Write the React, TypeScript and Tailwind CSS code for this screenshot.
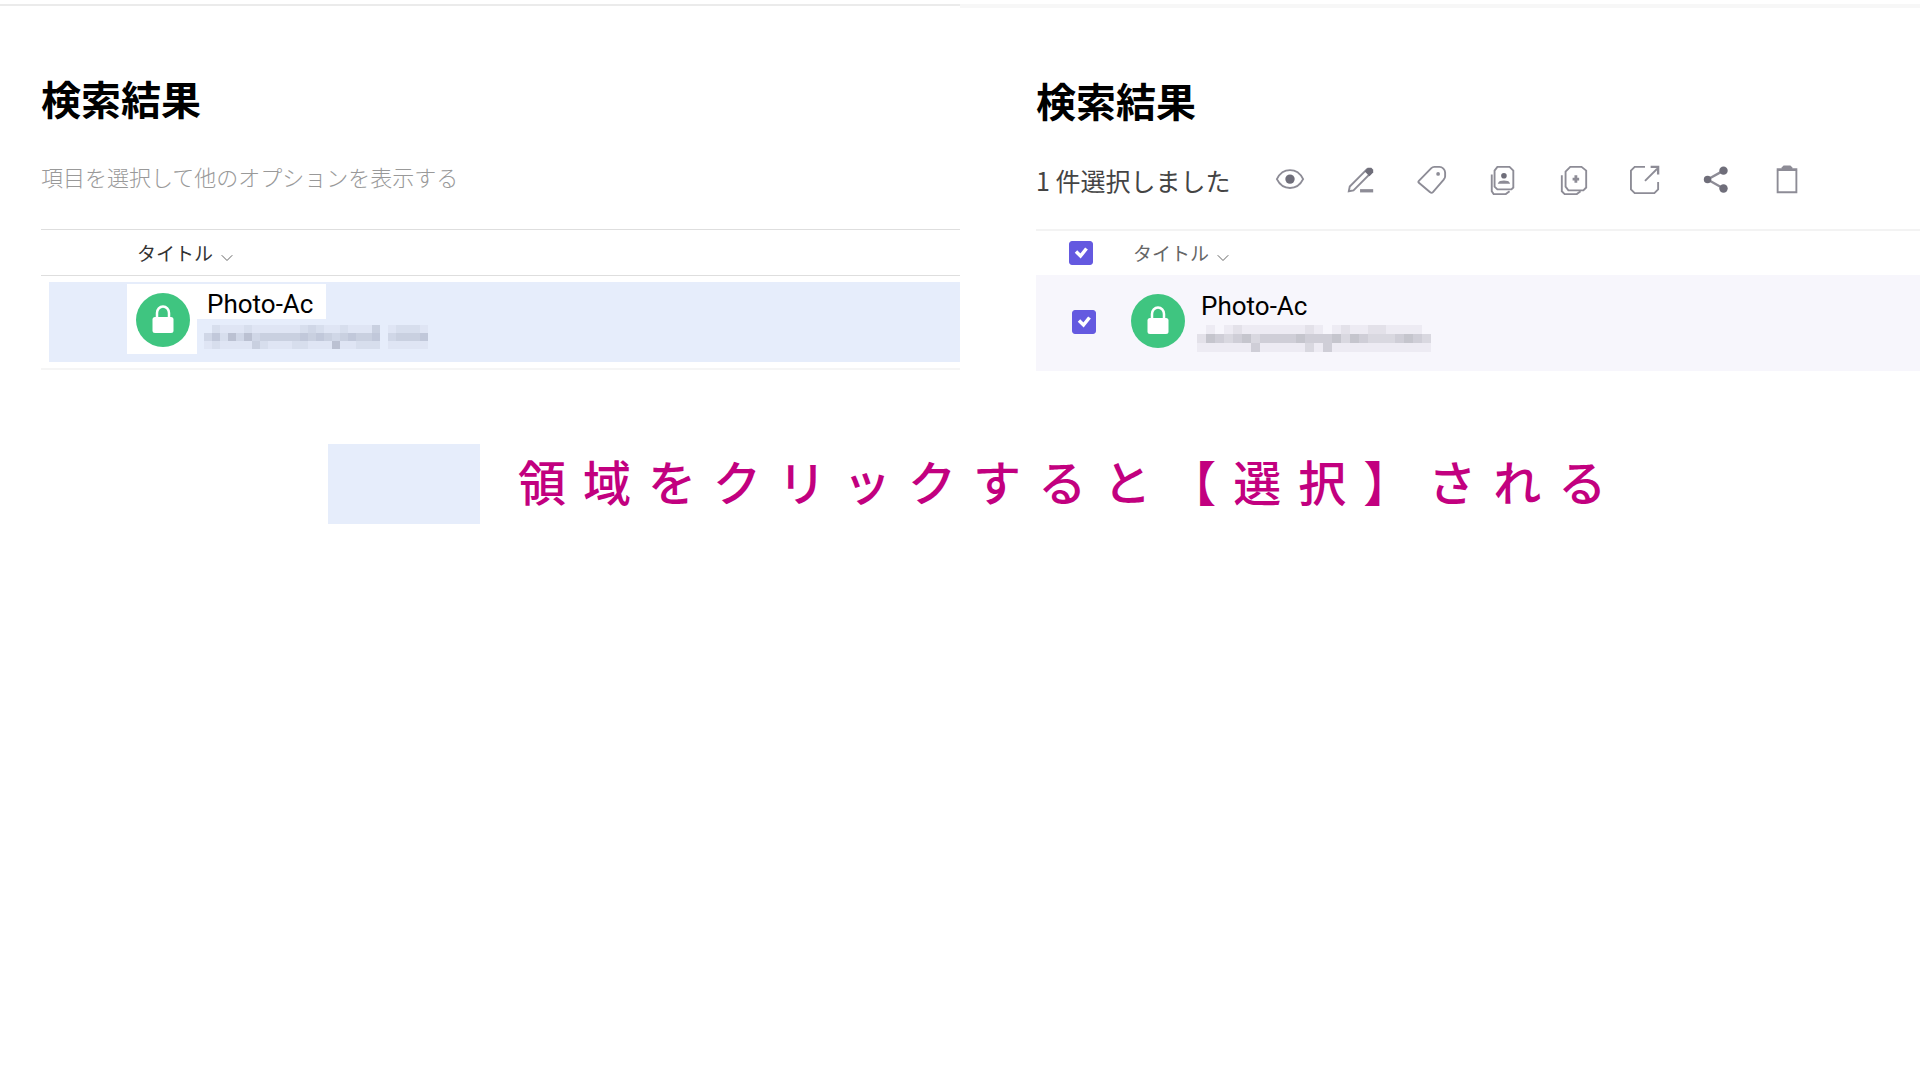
import { ChevronDown } from "lucide-react";

const jp = "font-['Noto_Sans_CJK_JP',sans-serif]";

const caption = "領域をクリックすると【選択】される";

const icons = [
  {
    label: "表示",
    art: (
      <>
        <path d="M2 15c3-6 7.500-9.500 14-9.500S27 9 30 15c-3 6-7.500 9.500-14 9.500S5 21 2 15z" />
        <circle cx="16" cy="15" r="5" fill="#6f6e7a" stroke="none" />
      </>
    ),
  },
  {
    label: "編集",
    art: (
      <>
        <path d="M3 28l1-5L22 5l4 4L8 27z" />
        <path d="M20 7l3-4h4l2 2v3l-4 4z" fill="#6f6e7a" stroke="none" />
        <path d="M15 27.500h14" strokeWidth="3.500" />
      </>
    ),
  },
  {
    label: "タグ",
    art: (
      <>
        <path d="M2 17L15 3.500c1-1 2-1.500 3.500-1.500H24c3 0 6 3 6 6v4c0 1.500-.5 2.500-1.500 3.500L17 29c-1 1-2 1-3 0l-12-10c-.7-.7-.7-1.300 0-2z" />
        <circle cx="22.500" cy="9.500" r="1" />
      </>
    ),
  },
  {
    label: "共有フォルダー",
    art: (
      <>
        <path d="M10 2h13l4 4v18l-2 2H10l-3-3V6z" />
        <path d="M4 10v18l2 3h13l4-3" />
        <circle cx="17" cy="11.500" r="3" fill="#6f6e7a" stroke="none" />
        <path d="M12 19c1-2 9-2 10 0z" fill="#6f6e7a" />
      </>
    ),
  },
  {
    label: "フォルダーに追加",
    art: (
      <>
        <path d="M12 2h12l5 4v18l-3 3H10l-3-4V7z" />
        <path d="M3 11v17l3 3h13l4-3" />
        <path d="M18 11v8M14.500 15h7" strokeWidth="3" />
      </>
    ),
  },
  {
    label: "開く",
    art: (
      <>
        <path d="M16 2H5L1 6v20l4 4h21l4-4v-8" />
        <path d="M16 17L29 4" />
        <path d="M22 2h8v8" strokeWidth="2.500" />
      </>
    ),
  },
  {
    label: "共有",
    art: (
      <>
        <path d="M24 6L7 15.500 24 25" strokeWidth="2.500" />
        <g fill="#6f6e7a" stroke="none">
          <circle cx="24" cy="6" r="4.500" />
          <circle cx="7" cy="15.500" r="4" />
          <circle cx="24" cy="25" r="4.500" />
        </g>
      </>
    ),
  },
  {
    label: "削除",
    art: (
      <>
        <path d="M6 6v23h20V6" />
        <path d="M5 5h22M11 4l2-2h6l2 2" strokeWidth="3" />
      </>
    ),
  },
];

function LockBadge() {
  return (
    <svg viewBox="0 0 54 54" className="size-[54px] shrink-0">
      <circle cx="27" cy="27" r="27" fill="#3fc580" />
      <path d="M21 26v-6a6 6.500 0 0 1 12 0v6" fill="none" stroke="#fff" strokeWidth="2.500" />
      <rect x="16.500" y="24" width="21" height="16" rx="2.500" fill="#fff" />
    </svg>
  );
}

// each digit is the darkness of one mosaic cell
function Mosaic({ rows, cell, fill }: { rows: string[]; cell: number; fill: string }) {
  return (
    <svg
      width={rows[0].length * cell}
      height={rows.length * cell}
      shapeRendering="crispEdges"
      className="block"
      aria-hidden="true"
    >
      {rows.map((row, y) =>
        [...row].map((n, x) => (
          <rect key={`${x}-${y}`} x={x * cell} y={y * cell} width={cell} height={cell} fill={fill} opacity={Number(n) / 12} />
        ))
      )}
    </svg>
  );
}

function CheckBox({ label }: { label: string }) {
  return (
    <span className="grid size-6 shrink-0">
      <input
        type="checkbox"
        defaultChecked
        aria-label={label}
        className="peer col-start-1 row-start-1 size-6 appearance-none rounded-[3px] border border-[#6459e0] checked:bg-[#6459e0]"
      />
      <svg
        viewBox="0 0 24 24"
        fill="none"
        stroke="#fff"
        strokeWidth="3.500"
        className="pointer-events-none invisible col-start-1 row-start-1 size-6 peer-checked:visible"
      >
        <path d="M7 10.500l4.500 4.500L17.500 7.500" />
      </svg>
    </span>
  );
}

function SortButton({ className }: { className: string }) {
  return (
    <button type="button" className={`flex items-center gap-1 text-[19px] leading-7 ${className}`}>
      タイトル
      <ChevronDown className="mt-2.5 size-5 text-[#666]" strokeWidth={1.2} />
    </button>
  );
}

export default function App() {
  return (
    <main className={`min-h-screen bg-white text-black ${jp}`}>
      <div className="grid grid-cols-2">
        <section className="pt-1">
          <div className="border-t-2 border-[#ebebeb] pl-[41px] pt-17">
            <h1 className="text-[40px] font-bold leading-12">検索結果</h1>
            <p className="mt-9 h-[71px] text-[22px] font-light leading-9 text-[#999]">項目を選択して他のオプションを表示する</p>
            <div className="flex h-[47px] items-center border-y border-[#dedede] pl-24">
              <SortButton className="text-[#333]" />
            </div>
            <div className="border-b-2 border-[#f5f5f5] py-1.5 pl-2">
              <div className="flex h-20 items-start bg-[#e6edfb] pl-[78px] pt-0.5">
                <div className="bg-white pb-[7px] pl-[9px] pr-[7px] pt-[9px]">
                  <LockBadge />
                </div>
                <div>
                  <p className="h-[35px] w-[129px] bg-white pl-2.5 font-[Roboto,sans-serif] text-[26px] leading-10">Photo-Ac</p>
                  <div className="pl-[7px] pt-1.5">
                    <Mosaic
                      cell={8}
                      fill="#8f96aa"
                      rows={["0211121111112321121114012221", "3526363444445454345445034445", "1211114211122111611222011111"]}
                    />
                  </div>
                </div>
              </div>
            </div>
          </div>
        </section>

        <section className="pt-1">
          <div className="border-t-4 border-[#f7f7f7] pl-[76px] pt-17">
            <h1 className="text-[40px] font-bold leading-12">検索結果</h1>
            <div className="mt-9 flex h-[69px] items-start">
              <p className="w-[239px] shrink-0 pt-0.5 text-[25px] leading-9 text-[#444]">1 件選択しました</p>
              <div className="flex gap-[41px] pt-[5px]">
                {icons.map((icon) => (
                  <button key={icon.label} type="button" aria-label={icon.label} className="shrink-0">
                    <svg viewBox="0 0 32 32" fill="none" stroke="#8d8c96" strokeWidth="2" className="size-[30px]">
                      {icon.art}
                    </svg>
                  </button>
                ))}
              </div>
            </div>
            <div className="flex h-[46px] items-center border-t-2 border-[#f3f3f3] pl-[33px]">
              <CheckBox label="すべて選択" />
              <div className="pl-10">
                <SortButton className="text-[#666]" />
              </div>
            </div>
            <div className="flex h-24 items-start bg-[#f7f6fc] pl-9 pt-[19px]">
              <div className="pt-4">
                <CheckBox label="Photo-Ac" />
              </div>
              <div className="pl-[35px]">
                <LockBadge />
              </div>
              <div className="pl-3">
                <p className="h-[31px] pl-1 font-[Roboto,sans-serif] text-[26px] leading-6">Photo-Ac</p>
                <Mosaic
                  cell={9}
                  fill="#807f8c"
                  rows={["01012111111121012112211110", "25434534444544453543334543", "11111141111131411111111111"]}
                />
              </div>
            </div>
          </div>
        </section>
      </div>

      <div className="flex items-start gap-[38px] pl-[328px] pt-[73px]">
        <div className="h-20 w-[152px] shrink-0 bg-[#e6edfb]" />
        <p className="flex gap-[17px] text-5xl font-medium leading-18 text-[#c2007f]">
          {[...caption].map((ch, i) => (
            <span key={i}>{ch}</span>
          ))}
        </p>
      </div>
    </main>
  );
}
